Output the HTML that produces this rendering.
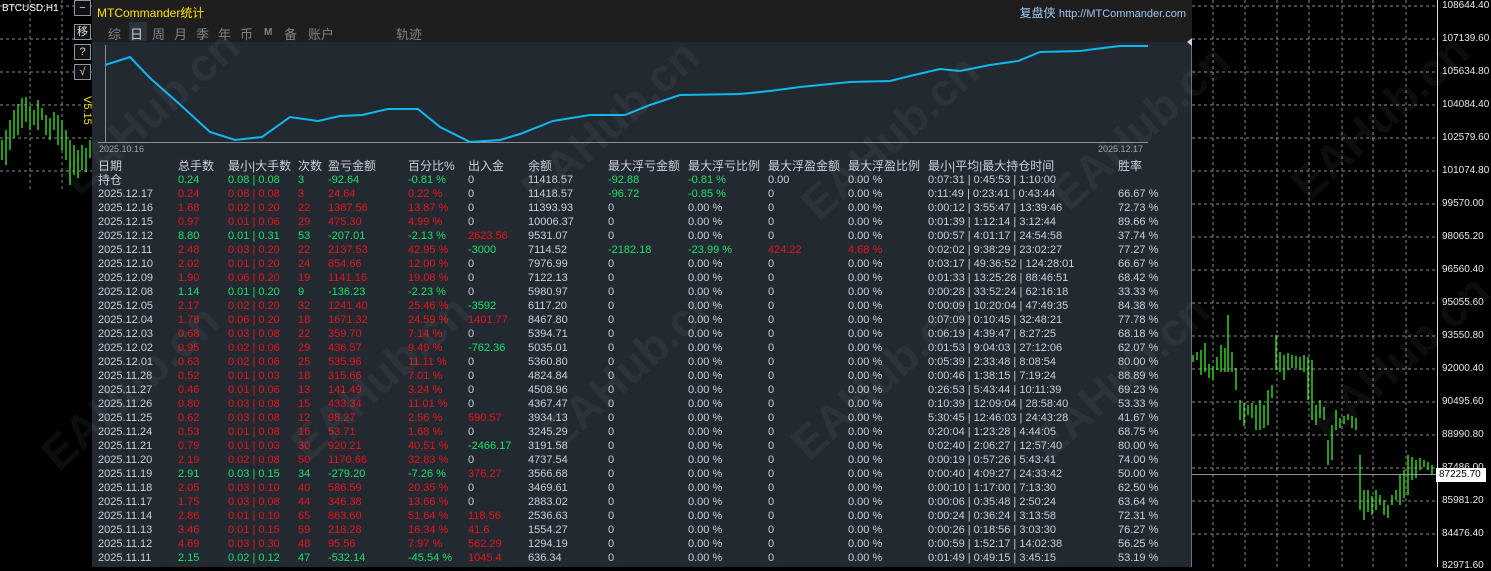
<!DOCTYPE html>
<html><head><meta charset="utf-8">
<style>
*{margin:0;padding:0;box-sizing:border-box}
body{width:1491px;height:567px;background:#000;overflow:hidden;position:relative;font-family:"Liberation Sans","Noto Sans CJK SC",sans-serif;font-size:11px;color:#c8d0dc}
.abs{position:absolute}
#panel{position:absolute;left:92px;top:0;width:1100px;height:567px;background:#232931;border-right:1px solid #6a7480}
#hdr{position:absolute;left:0;top:0;width:1100px;height:42px;background:#1e1e1e}
.tab{position:absolute;top:24px;font-size:13px;color:#7c838c}
.row{position:absolute;left:6px;height:14px;line-height:14px;white-space:nowrap;font-size:11px}
.row span{position:absolute;top:0}
.r{color:#e8141c}.g{color:#1de06e}
.wm{position:absolute;font:bold 46px "Liberation Sans",sans-serif;color:rgba(200,200,200,0.065);transform:rotate(-42deg);white-space:nowrap}
.lab{position:absolute;left:1442px;font-size:10px;color:#e8e8e8}
.btn{position:absolute;left:74px;width:17px;height:16px;border:1px solid #8a96a6;background:#111;color:#ddd;font-size:11px;text-align:center;line-height:14px}
</style></head><body>
<svg class="abs" style="left:0;top:0" width="1491" height="567">
<g stroke="#8a8a8a" stroke-dasharray="3,3" stroke-width="1">
<line x1="0" y1="6" x2="92" y2="6"/><line x1="0" y1="39" x2="92" y2="39"/><line x1="0" y1="72" x2="92" y2="72"/><line x1="0" y1="105" x2="92" y2="105"/><line x1="0" y1="138" x2="92" y2="138"/><line x1="0" y1="171" x2="92" y2="171"/>
<line x1="30" y1="0" x2="30" y2="190"/><line x1="62" y1="0" x2="62" y2="190"/>
<g>
<line x1="1192" y1="6" x2="1437" y2="6"/><line x1="1192" y1="39" x2="1437" y2="39"/><line x1="1192" y1="72" x2="1437" y2="72"/><line x1="1192" y1="105" x2="1437" y2="105"/><line x1="1192" y1="138" x2="1437" y2="138"/><line x1="1192" y1="171" x2="1437" y2="171"/><line x1="1192" y1="204" x2="1437" y2="204"/><line x1="1192" y1="237" x2="1437" y2="237"/><line x1="1192" y1="270" x2="1437" y2="270"/><line x1="1192" y1="303" x2="1437" y2="303"/><line x1="1192" y1="336" x2="1437" y2="336"/><line x1="1192" y1="369" x2="1437" y2="369"/><line x1="1192" y1="402" x2="1437" y2="402"/><line x1="1192" y1="435" x2="1437" y2="435"/><line x1="1192" y1="468" x2="1437" y2="468"/><line x1="1192" y1="501" x2="1437" y2="501"/><line x1="1192" y1="534" x2="1437" y2="534"/>
<line x1="1213" y1="0" x2="1213" y2="567"/><line x1="1245" y1="0" x2="1245" y2="567"/><line x1="1277" y1="0" x2="1277" y2="567"/><line x1="1309" y1="0" x2="1309" y2="567"/><line x1="1342" y1="0" x2="1342" y2="567"/><line x1="1373" y1="0" x2="1373" y2="567"/><line x1="1406" y1="0" x2="1406" y2="567"/>
</g></g>
<line x1="1437.5" y1="0" x2="1437.5" y2="567" stroke="#e0e0e0"/>
<line x1="1192" y1="474.5" x2="1437" y2="474.5" stroke="#8a96a6"/>
<path stroke="#3af028" stroke-width="1.3" fill="none" d="M1193 355V362M1197 352V360M1201 350V375M1205 343V372M1209 364V378M1213 366V380M1217 357V370M1221 345V372M1225 348V372M1228 315V372M1232 352V372M1236 368V390M1240 400V420M1244 403V426M1248 405V415M1252 403V418M1256 405V430M1260 400V430M1264 405V428M1268 390V425M1272 385V398M1276 335V370M1280 352V372M1284 355V380M1288 353V370M1292 355V368M1296 356V368M1300 357V370M1304 355V372M1308 357V400M1312 360V420M1316 405V425M1320 400V418M1324 407V420M1328 440V465M1332 425V460M1336 410V430M1340 418V428M1344 416V424M1348 414V420M1352 416V428M1356 418V430M1360 455V510M1364 490V520M1368 490V512M1372 496V515M1376 490V510M1380 495V505M1384 500V515M1388 505V518M1392 495V505M1396 490V500M1400 475V505M1404 470V498M1408 455V495M1412 457V480M1416 460V478M1420 458V470M1424 460V467M1428 462V470M1432 465V475
M2 140V160M6 130V165M10 120V150M14 110V138M18 104V135M22 98V128M26 97V122M30 106V130M34 110V125M38 100V130M42 108V120M46 115V135M50 118V140M54 112V130M58 115V145M62 120V150M66 130V160M70 140V185M74 145V175M78 150V178M82 145V170M86 148V172M90 140V158"/>
</svg>
<div class="abs" style="left:1436px;top:468px;width:50px;height:14px;background:#fff;color:#000;font-size:10px;line-height:14px;padding-left:3px">87225.70</div>
<div class="lab" style="top:0">108644.40</div><div class="lab" style="top:33px">107139.60</div><div class="lab" style="top:66px">105634.80</div><div class="lab" style="top:99px">104084.40</div><div class="lab" style="top:132px">102579.60</div><div class="lab" style="top:165px">101074.80</div><div class="lab" style="top:198px">99570.00</div><div class="lab" style="top:231px">98065.20</div><div class="lab" style="top:264px">96560.40</div><div class="lab" style="top:297px">95055.60</div><div class="lab" style="top:330px">93550.80</div><div class="lab" style="top:363px">92000.40</div><div class="lab" style="top:396px">90495.60</div><div class="lab" style="top:429px">88990.80</div><div class="lab" style="top:462px">87486.00</div><div class="lab" style="top:495px">85981.20</div><div class="lab" style="top:528px">84476.40</div><div class="lab" style="top:560px">82971.60</div>
<div class="abs" style="left:2px;top:3px;font-size:10px;color:#fff">BTCUSD,H1</div>
<div class="btn" style="top:0">−</div><div class="btn" style="top:24px">移</div><div class="btn" style="top:44px">?</div><div class="btn" style="top:64px">√</div>
<div class="abs" style="top:96px;color:#ffe000;font-size:11px;transform:rotate(90deg);transform-origin:left top;left:93px">V5.15</div>
<div id="panel">
<div id="hdr">
<div class="abs" style="left:5px;top:4px;color:#ffe000;font-size:12px">MTCommander统计</div>
<div class="abs" style="right:6px;top:4px;color:#9cc8f0;font-size:12px">复盘侠 <span style="font-size:11px">http://MTCommander.com</span></div>
<div class="abs" style="left:37px;top:22px;width:18px;height:19px;background:#2a323c"></div>
<span class="tab" style="left:16px">综</span><span class="tab" style="left:38px;color:#c8d0dc">日</span><span class="tab" style="left:60px">周</span><span class="tab" style="left:82px">月</span><span class="tab" style="left:104px">季</span><span class="tab" style="left:126px">年</span><span class="tab" style="left:148px">币</span><span class="tab" style="left:172px;font-size:10px;top:27px;font-weight:bold">M</span><span class="tab" style="left:192px">备</span><span class="tab" style="left:216px">账户</span><span class="tab" style="left:304px">轨迹</span>
</div>
<svg class="abs" style="left:0;top:0" width="1100" height="160">
<line x1="6" y1="142.5" x2="1056" y2="142.5" stroke="#8a9098"/>
<line x1="13.5" y1="45" x2="13.5" y2="142" stroke="#8a9098"/>
<polyline fill="none" stroke="#10b8f0" stroke-width="2" points="13,65 38,57 58,78 83,100 118,132 143,140 170,137 198,117 226,121 248,116 270,115 296,109 326,109 348,127 378,142 408,140 428,134 461,121 498,115 533,115 558,105 588,95 648,94 678,91 708,87 758,82 798,81 818,76 848,69 868,71 898,65 926,61 948,52 988,51 1003,49 1028,46 1056,46"/>
<path d="M1100 38l-5 4 5 4z" fill="#c8d0dc"/>
</svg>
<div class="abs" style="left:7px;top:144px;font-size:9px;color:#9aa2ac">2025.10.16</div>
<div class="abs" style="left:1006px;top:144px;font-size:9px;color:#9aa2ac">2025.12.17</div>
<div class="row" style="top:159px;font-size:12px"><span style="left:0">日期</span><span style="left:80px">总手数</span><span style="left:130px">最小|大手数</span><span style="left:200px">次数</span><span style="left:230px">盈亏金额</span><span style="left:310px">百分比%</span><span style="left:370px">出入金</span><span style="left:430px">余额</span><span style="left:510px">最大浮亏金额</span><span style="left:590px">最大浮亏比例</span><span style="left:670px">最大浮盈金额</span><span style="left:750px">最大浮盈比例</span><span style="left:830px">最小|平均|最大持仓时间</span><span style="left:1020px">胜率</span></div>
<div class="row" style="top:173px"><span style="left:0;font-size:12px">持仓</span><span class="g" style="left:80px">0.24</span><span class="g" style="left:130px">0.08 | 0.08</span><span class="g" style="left:200px">3</span><span class="g" style="left:230px">-92.64</span><span class="g" style="left:310px">-0.81 %</span><span style="left:370px">0</span><span style="left:430px">11418.57</span><span class="g" style="left:510px">-92.88</span><span class="g" style="left:590px">-0.81 %</span><span style="left:670px">0.00</span><span style="left:750px">0.00 %</span><span style="left:830px">0:07:31 | 0:45:53 | 1:10:00</span></div>
<div class="row" style="top:187px"><span style="left:0">2025.12.17</span><span class="r" style="left:80px">0.24</span><span class="r" style="left:130px">0.08 | 0.08</span><span class="r" style="left:200px">3</span><span class="r" style="left:230px">24.64</span><span class="r" style="left:310px">0.22 %</span><span style="left:370px">0</span><span style="left:430px">11418.57</span><span class="g" style="left:510px">-96.72</span><span class="g" style="left:590px">-0.85 %</span><span style="left:670px">0</span><span style="left:750px">0.00 %</span><span style="left:830px">0:11:49 | 0:23:41 | 0:43:44</span><span style="left:1020px">66.67 %</span></div>
<div class="row" style="top:201px"><span style="left:0">2025.12.16</span><span class="r" style="left:80px">1.68</span><span class="r" style="left:130px">0.02 | 0.20</span><span class="r" style="left:200px">22</span><span class="r" style="left:230px">1387.56</span><span class="r" style="left:310px">13.87 %</span><span style="left:370px">0</span><span style="left:430px">11393.93</span><span style="left:510px">0</span><span style="left:590px">0.00 %</span><span style="left:670px">0</span><span style="left:750px">0.00 %</span><span style="left:830px">0:00:12 | 3:55:47 | 13:39:46</span><span style="left:1020px">72.73 %</span></div>
<div class="row" style="top:215px"><span style="left:0">2025.12.15</span><span class="r" style="left:80px">0.97</span><span class="r" style="left:130px">0.01 | 0.06</span><span class="r" style="left:200px">29</span><span class="r" style="left:230px">475.30</span><span class="r" style="left:310px">4.99 %</span><span style="left:370px">0</span><span style="left:430px">10006.37</span><span style="left:510px">0</span><span style="left:590px">0.00 %</span><span style="left:670px">0</span><span style="left:750px">0.00 %</span><span style="left:830px">0:01:39 | 1:12:14 | 3:12:44</span><span style="left:1020px">89.66 %</span></div>
<div class="row" style="top:229px"><span style="left:0">2025.12.12</span><span class="g" style="left:80px">8.80</span><span class="g" style="left:130px">0.01 | 0.31</span><span class="g" style="left:200px">53</span><span class="g" style="left:230px">-207.01</span><span class="g" style="left:310px">-2.13 %</span><span class="r" style="left:370px">2623.56</span><span style="left:430px">9531.07</span><span style="left:510px">0</span><span style="left:590px">0.00 %</span><span style="left:670px">0</span><span style="left:750px">0.00 %</span><span style="left:830px">0:00:57 | 4:01:17 | 24:54:58</span><span style="left:1020px">37.74 %</span></div>
<div class="row" style="top:243px"><span style="left:0">2025.12.11</span><span class="r" style="left:80px">2.48</span><span class="r" style="left:130px">0.03 | 0.20</span><span class="r" style="left:200px">22</span><span class="r" style="left:230px">2137.53</span><span class="r" style="left:310px">42.95 %</span><span class="g" style="left:370px">-3000</span><span style="left:430px">7114.52</span><span class="g" style="left:510px">-2182.18</span><span class="g" style="left:590px">-23.99 %</span><span class="r" style="left:670px">424.22</span><span class="r" style="left:750px">4.68 %</span><span style="left:830px">0:02:02 | 9:38:29 | 23:02:27</span><span style="left:1020px">77.27 %</span></div>
<div class="row" style="top:257px"><span style="left:0">2025.12.10</span><span class="r" style="left:80px">2.02</span><span class="r" style="left:130px">0.01 | 0.20</span><span class="r" style="left:200px">24</span><span class="r" style="left:230px">854.66</span><span class="r" style="left:310px">12.00 %</span><span style="left:370px">0</span><span style="left:430px">7976.99</span><span style="left:510px">0</span><span style="left:590px">0.00 %</span><span style="left:670px">0</span><span style="left:750px">0.00 %</span><span style="left:830px">0:03:17 | 49:36:52 | 124:28:01</span><span style="left:1020px">66.67 %</span></div>
<div class="row" style="top:271px"><span style="left:0">2025.12.09</span><span class="r" style="left:80px">1.90</span><span class="r" style="left:130px">0.06 | 0.20</span><span class="r" style="left:200px">19</span><span class="r" style="left:230px">1141.16</span><span class="r" style="left:310px">19.08 %</span><span style="left:370px">0</span><span style="left:430px">7122.13</span><span style="left:510px">0</span><span style="left:590px">0.00 %</span><span style="left:670px">0</span><span style="left:750px">0.00 %</span><span style="left:830px">0:01:33 | 13:25:28 | 88:46:51</span><span style="left:1020px">68.42 %</span></div>
<div class="row" style="top:285px"><span style="left:0">2025.12.08</span><span class="g" style="left:80px">1.14</span><span class="g" style="left:130px">0.01 | 0.20</span><span class="g" style="left:200px">9</span><span class="g" style="left:230px">-136.23</span><span class="g" style="left:310px">-2.23 %</span><span style="left:370px">0</span><span style="left:430px">5980.97</span><span style="left:510px">0</span><span style="left:590px">0.00 %</span><span style="left:670px">0</span><span style="left:750px">0.00 %</span><span style="left:830px">0:00:28 | 33:52:24 | 62:16:18</span><span style="left:1020px">33.33 %</span></div>
<div class="row" style="top:299px"><span style="left:0">2025.12.05</span><span class="r" style="left:80px">2.17</span><span class="r" style="left:130px">0.02 | 0.20</span><span class="r" style="left:200px">32</span><span class="r" style="left:230px">1241.40</span><span class="r" style="left:310px">25.46 %</span><span class="g" style="left:370px">-3592</span><span style="left:430px">6117.20</span><span style="left:510px">0</span><span style="left:590px">0.00 %</span><span style="left:670px">0</span><span style="left:750px">0.00 %</span><span style="left:830px">0:00:09 | 10:20:04 | 47:49:35</span><span style="left:1020px">84.38 %</span></div>
<div class="row" style="top:313px"><span style="left:0">2025.12.04</span><span class="r" style="left:80px">1.78</span><span class="r" style="left:130px">0.06 | 0.20</span><span class="r" style="left:200px">18</span><span class="r" style="left:230px">1671.32</span><span class="r" style="left:310px">24.59 %</span><span class="r" style="left:370px">1401.77</span><span style="left:430px">8467.80</span><span style="left:510px">0</span><span style="left:590px">0.00 %</span><span style="left:670px">0</span><span style="left:750px">0.00 %</span><span style="left:830px">0:07:09 | 0:10:45 | 32:48:21</span><span style="left:1020px">77.78 %</span></div>
<div class="row" style="top:327px"><span style="left:0">2025.12.03</span><span class="r" style="left:80px">0.68</span><span class="r" style="left:130px">0.03 | 0.08</span><span class="r" style="left:200px">22</span><span class="r" style="left:230px">359.70</span><span class="r" style="left:310px">7.14 %</span><span style="left:370px">0</span><span style="left:430px">5394.71</span><span style="left:510px">0</span><span style="left:590px">0.00 %</span><span style="left:670px">0</span><span style="left:750px">0.00 %</span><span style="left:830px">0:06:19 | 4:39:47 | 8:27:25</span><span style="left:1020px">68.18 %</span></div>
<div class="row" style="top:341px"><span style="left:0">2025.12.02</span><span class="r" style="left:80px">0.95</span><span class="r" style="left:130px">0.02 | 0.06</span><span class="r" style="left:200px">29</span><span class="r" style="left:230px">436.57</span><span class="r" style="left:310px">9.49 %</span><span class="g" style="left:370px">-762.36</span><span style="left:430px">5035.01</span><span style="left:510px">0</span><span style="left:590px">0.00 %</span><span style="left:670px">0</span><span style="left:750px">0.00 %</span><span style="left:830px">0:01:53 | 9:04:03 | 27:12:06</span><span style="left:1020px">62.07 %</span></div>
<div class="row" style="top:355px"><span style="left:0">2025.12.01</span><span class="r" style="left:80px">0.63</span><span class="r" style="left:130px">0.02 | 0.06</span><span class="r" style="left:200px">25</span><span class="r" style="left:230px">535.96</span><span class="r" style="left:310px">11.11 %</span><span style="left:370px">0</span><span style="left:430px">5360.80</span><span style="left:510px">0</span><span style="left:590px">0.00 %</span><span style="left:670px">0</span><span style="left:750px">0.00 %</span><span style="left:830px">0:05:39 | 2:33:48 | 8:08:54</span><span style="left:1020px">80.00 %</span></div>
<div class="row" style="top:369px"><span style="left:0">2025.11.28</span><span class="r" style="left:80px">0.52</span><span class="r" style="left:130px">0.01 | 0.03</span><span class="r" style="left:200px">18</span><span class="r" style="left:230px">315.66</span><span class="r" style="left:310px">7.01 %</span><span style="left:370px">0</span><span style="left:430px">4824.84</span><span style="left:510px">0</span><span style="left:590px">0.00 %</span><span style="left:670px">0</span><span style="left:750px">0.00 %</span><span style="left:830px">0:00:46 | 1:38:15 | 7:19:24</span><span style="left:1020px">88.89 %</span></div>
<div class="row" style="top:383px"><span style="left:0">2025.11.27</span><span class="r" style="left:80px">0.46</span><span class="r" style="left:130px">0.01 | 0.06</span><span class="r" style="left:200px">13</span><span class="r" style="left:230px">141.49</span><span class="r" style="left:310px">3.24 %</span><span style="left:370px">0</span><span style="left:430px">4508.96</span><span style="left:510px">0</span><span style="left:590px">0.00 %</span><span style="left:670px">0</span><span style="left:750px">0.00 %</span><span style="left:830px">0:26:53 | 5:43:44 | 10:11:39</span><span style="left:1020px">69.23 %</span></div>
<div class="row" style="top:397px"><span style="left:0">2025.11.26</span><span class="r" style="left:80px">0.80</span><span class="r" style="left:130px">0.03 | 0.08</span><span class="r" style="left:200px">15</span><span class="r" style="left:230px">433.34</span><span class="r" style="left:310px">11.01 %</span><span style="left:370px">0</span><span style="left:430px">4367.47</span><span style="left:510px">0</span><span style="left:590px">0.00 %</span><span style="left:670px">0</span><span style="left:750px">0.00 %</span><span style="left:830px">0:10:39 | 12:09:04 | 28:58:40</span><span style="left:1020px">53.33 %</span></div>
<div class="row" style="top:411px"><span style="left:0">2025.11.25</span><span class="r" style="left:80px">0.62</span><span class="r" style="left:130px">0.03 | 0.08</span><span class="r" style="left:200px">12</span><span class="r" style="left:230px">98.27</span><span class="r" style="left:310px">2.56 %</span><span class="r" style="left:370px">590.57</span><span style="left:430px">3934.13</span><span style="left:510px">0</span><span style="left:590px">0.00 %</span><span style="left:670px">0</span><span style="left:750px">0.00 %</span><span style="left:830px">5:30:45 | 12:46:03 | 24:43:28</span><span style="left:1020px">41.67 %</span></div>
<div class="row" style="top:425px"><span style="left:0">2025.11.24</span><span class="r" style="left:80px">0.53</span><span class="r" style="left:130px">0.01 | 0.08</span><span class="r" style="left:200px">16</span><span class="r" style="left:230px">53.71</span><span class="r" style="left:310px">1.68 %</span><span style="left:370px">0</span><span style="left:430px">3245.29</span><span style="left:510px">0</span><span style="left:590px">0.00 %</span><span style="left:670px">0</span><span style="left:750px">0.00 %</span><span style="left:830px">0:20:04 | 1:23:28 | 4:44:05</span><span style="left:1020px">68.75 %</span></div>
<div class="row" style="top:439px"><span style="left:0">2025.11.21</span><span class="r" style="left:80px">0.79</span><span class="r" style="left:130px">0.01 | 0.03</span><span class="r" style="left:200px">30</span><span class="r" style="left:230px">920.21</span><span class="r" style="left:310px">40.51 %</span><span class="g" style="left:370px">-2466.17</span><span style="left:430px">3191.58</span><span style="left:510px">0</span><span style="left:590px">0.00 %</span><span style="left:670px">0</span><span style="left:750px">0.00 %</span><span style="left:830px">0:02:40 | 2:06:27 | 12:57:40</span><span style="left:1020px">80.00 %</span></div>
<div class="row" style="top:453px"><span style="left:0">2025.11.20</span><span class="r" style="left:80px">2.19</span><span class="r" style="left:130px">0.02 | 0.08</span><span class="r" style="left:200px">50</span><span class="r" style="left:230px">1170.66</span><span class="r" style="left:310px">32.83 %</span><span style="left:370px">0</span><span style="left:430px">4737.54</span><span style="left:510px">0</span><span style="left:590px">0.00 %</span><span style="left:670px">0</span><span style="left:750px">0.00 %</span><span style="left:830px">0:00:19 | 0:57:26 | 5:43:41</span><span style="left:1020px">74.00 %</span></div>
<div class="row" style="top:467px"><span style="left:0">2025.11.19</span><span class="g" style="left:80px">2.91</span><span class="g" style="left:130px">0.03 | 0.15</span><span class="g" style="left:200px">34</span><span class="g" style="left:230px">-279.20</span><span class="g" style="left:310px">-7.26 %</span><span class="r" style="left:370px">376.27</span><span style="left:430px">3566.68</span><span style="left:510px">0</span><span style="left:590px">0.00 %</span><span style="left:670px">0</span><span style="left:750px">0.00 %</span><span style="left:830px">0:00:40 | 4:09:27 | 24:33:42</span><span style="left:1020px">50.00 %</span></div>
<div class="row" style="top:481px"><span style="left:0">2025.11.18</span><span class="r" style="left:80px">2.05</span><span class="r" style="left:130px">0.03 | 0.10</span><span class="r" style="left:200px">40</span><span class="r" style="left:230px">586.59</span><span class="r" style="left:310px">20.35 %</span><span style="left:370px">0</span><span style="left:430px">3469.61</span><span style="left:510px">0</span><span style="left:590px">0.00 %</span><span style="left:670px">0</span><span style="left:750px">0.00 %</span><span style="left:830px">0:00:10 | 1:17:00 | 7:13:30</span><span style="left:1020px">62.50 %</span></div>
<div class="row" style="top:495px"><span style="left:0">2025.11.17</span><span class="r" style="left:80px">1.75</span><span class="r" style="left:130px">0.03 | 0.08</span><span class="r" style="left:200px">44</span><span class="r" style="left:230px">346.38</span><span class="r" style="left:310px">13.66 %</span><span style="left:370px">0</span><span style="left:430px">2883.02</span><span style="left:510px">0</span><span style="left:590px">0.00 %</span><span style="left:670px">0</span><span style="left:750px">0.00 %</span><span style="left:830px">0:00:06 | 0:35:48 | 2:50:24</span><span style="left:1020px">63.64 %</span></div>
<div class="row" style="top:509px"><span style="left:0">2025.11.14</span><span class="r" style="left:80px">2.86</span><span class="r" style="left:130px">0.01 | 0.10</span><span class="r" style="left:200px">65</span><span class="r" style="left:230px">863.60</span><span class="r" style="left:310px">51.64 %</span><span class="r" style="left:370px">118.56</span><span style="left:430px">2536.63</span><span style="left:510px">0</span><span style="left:590px">0.00 %</span><span style="left:670px">0</span><span style="left:750px">0.00 %</span><span style="left:830px">0:00:24 | 0:36:24 | 3:13:58</span><span style="left:1020px">72.31 %</span></div>
<div class="row" style="top:523px"><span style="left:0">2025.11.13</span><span class="r" style="left:80px">3.46</span><span class="r" style="left:130px">0.01 | 0.15</span><span class="r" style="left:200px">59</span><span class="r" style="left:230px">218.28</span><span class="r" style="left:310px">16.34 %</span><span class="r" style="left:370px">41.6</span><span style="left:430px">1554.27</span><span style="left:510px">0</span><span style="left:590px">0.00 %</span><span style="left:670px">0</span><span style="left:750px">0.00 %</span><span style="left:830px">0:00:26 | 0:18:56 | 3:03:30</span><span style="left:1020px">76.27 %</span></div>
<div class="row" style="top:537px"><span style="left:0">2025.11.12</span><span class="r" style="left:80px">4.69</span><span class="r" style="left:130px">0.03 | 0.30</span><span class="r" style="left:200px">48</span><span class="r" style="left:230px">95.56</span><span class="r" style="left:310px">7.97 %</span><span class="r" style="left:370px">562.29</span><span style="left:430px">1294.19</span><span style="left:510px">0</span><span style="left:590px">0.00 %</span><span style="left:670px">0</span><span style="left:750px">0.00 %</span><span style="left:830px">0:00:59 | 1:52:17 | 14:02:38</span><span style="left:1020px">56.25 %</span></div>
<div class="row" style="top:551px"><span style="left:0">2025.11.11</span><span class="g" style="left:80px">2.15</span><span class="g" style="left:130px">0.02 | 0.12</span><span class="g" style="left:200px">47</span><span class="g" style="left:230px">-532.14</span><span class="g" style="left:310px">-45.54 %</span><span class="r" style="left:370px">1045.4</span><span style="left:430px">636.34</span><span style="left:510px">0</span><span style="left:590px">0.00 %</span><span style="left:670px">0</span><span style="left:750px">0.00 %</span><span style="left:830px">0:01:49 | 0:49:15 | 3:45:15</span><span style="left:1020px">53.19 %</span></div>
</div>
<div class="wm" style="left:40px;top:85px">EAHub.cn</div>
<div class="wm" style="left:500px;top:95px">EAHub.cn</div>
<div class="wm" style="left:780px;top:110px">EAHub.cn</div>
<div class="wm" style="left:1030px;top:100px">EAHub.cn</div>
<div class="wm" style="left:1270px;top:90px">EAHub.cn</div>
<div class="wm" style="left:20px;top:360px">EAHub.cn</div>
<div class="wm" style="left:270px;top:350px">EAHub.cn</div>
<div class="wm" style="left:520px;top:340px">EAHub.cn</div>
<div class="wm" style="left:770px;top:350px">EAHub.cn</div>
<div class="wm" style="left:1010px;top:350px">EAHub.cn</div>
<div class="wm" style="left:1290px;top:330px">EAHub.cn</div>
</body></html>
